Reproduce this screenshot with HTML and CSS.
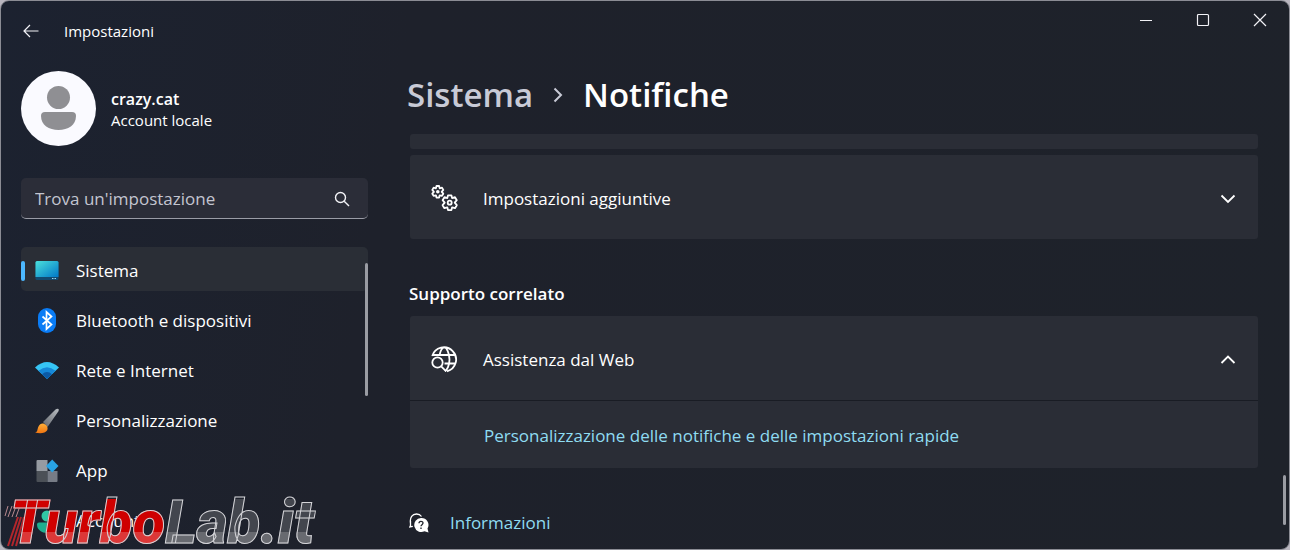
FILE: index.html
```html
<!DOCTYPE html>
<html lang="it">
<head>
    <meta charset="UTF-8">
    <meta name="viewport" content="width=device-width, initial-scale=1.0">
    <title>Impostazioni</title>
    <link rel="stylesheet" href="styles.css">
</head>
<body>

<div class="window">
    <header class="titlebar">
        <button class="back" aria-label="Indietro">
            <svg width="16" height="14" viewBox="0 0 16 14"><path d="M15.500 7H1M7 1L1 7l6 6"/></svg>
        </button>
        <span class="title">Impostazioni</span>
        <div class="window-controls">
            <button aria-label="Riduci a icona"><svg width="14" height="14" viewBox="0 0 14 14"><path d="M1 7.500h12"/></svg></button>
            <button aria-label="Ingrandisci"><svg width="14" height="14" viewBox="0 0 14 14"><rect x="1.500" y="1.500" width="11" height="11" rx="1"/></svg></button>
            <button aria-label="Chiudi"><svg width="14" height="14" viewBox="0 0 14 14"><path d="M1 1l12 12M13 1L1 13"/></svg></button>
        </div>
    </header>

    <div class="content">
        <aside class="sidebar">
            <div class="profile">
                <svg width="75" height="75" viewBox="0 0 75 75">
                    <circle cx="37.500" cy="37.500" r="37.500" fill="#fafaff"/>
                    <circle cx="37.500" cy="26.500" r="11.500" fill="#8f8f93"/>
                    <path d="M24 41h27q4 0 4 4c0 9-8 14-17.500 14S20 54 20 45q0-4 4-4z" fill="#8f8f93"/>
                </svg>
                <div class="user">
                    <div class="name">crazy.cat</div>
                    <div class="account">Account locale</div>
                </div>
            </div>

            <form class="search">
                <input type="search" placeholder="Trova un'impostazione" aria-label="Trova un'impostazione">
                <button type="button" aria-label="Cerca">
                    <svg width="16" height="16" viewBox="0 0 16 16"><circle cx="6.500" cy="6.500" r="5"/><path d="M10.200 10.200L15 15"/></svg>
                </button>
            </form>

            <nav class="nav">
                <a class="active" href="#sistema">
                    <svg width="24" height="24" viewBox="0 0 24 24">
                        <defs><linearGradient id="screen" x1="0" y1="0" x2="1" y2="1"><stop offset="0" stop-color="#4be0dc"/><stop offset="1" stop-color="#0078c8"/></linearGradient></defs>
                        <rect x=".5" y="2" width="23" height="19" rx="1.500" fill="#124a70"/>
                        <path d="M2 2h20q1.500 0 1.500 1.500V18H.5V3.500Q.5 2 2 2z" fill="url(#screen)"/>
                        <path d="M17 19.500h1.500M19.500 19.500H21" stroke="#9fd4ee"/>
                    </svg>
                    Sistema
                </a>
                <a href="#bluetooth">
                    <svg width="24" height="26" viewBox="0 0 24 26">
                        <rect x="3" y="0" width="18" height="25" rx="9" fill="#0a7cf5"/>
                        <path d="M7.500 8.500l9 8-5 4.500V4l5 4.500-9 8" fill="none" stroke="#fff" stroke-width="1.700"/>
                    </svg>
                    Bluetooth e dispositivi
                </a>
                <a href="#rete">
                    <svg width="24" height="24" viewBox="0 0 24 24">
                        <path d="M12 20L0 8.500Q12-2.500 24 8.500z" fill="#36c5f5"/>
                        <path d="M12 20L3.500 11.800Q12 4.500 20.500 11.800z" fill="#1688d8"/>
                        <path d="M12 20L7 15.200Q12 10.800 17 15.200z" fill="#0c5aa5"/>
                    </svg>
                    Rete e Internet
                </a>
                <a href="#personalizzazione">
                    <svg width="24" height="26" viewBox="0 0 24 26">
                        <defs>
                            <linearGradient id="handle" x1="0" y1="1" x2="1" y2="0"><stop offset="0" stop-color="#63676d"/><stop offset="1" stop-color="#b9bdc2"/></linearGradient>
                            <linearGradient id="bristle" x1="0" y1="0" x2="0" y2="1"><stop offset="0" stop-color="#ffb03a"/><stop offset="1" stop-color="#ef7410"/></linearGradient>
                        </defs>
                        <path d="M8 14L20.500 1.500q1.500-1.300 3-.5 .6 1.200-.2 2.500L12.500 19z" fill="url(#handle)"/>
                        <path d="M0 24.500c3-.5 2-3 3.500-6 1.500-3.500 5-4 7.500-1.500s2 6-1.500 7.500c-3 1.200-6.500.8-9.500 0z" fill="url(#bristle)"/>
                    </svg>
                    Personalizzazione
                </a>
                <a href="#app">
                    <svg width="24" height="24" viewBox="0 0 24 24">
                        <path d="M1.500 2q0-1 1-1h10v11h-11z" fill="#969ba2"/>
                        <path d="M1.500 12h11v11h-10q-1 0-1-1z" fill="#4b5057"/>
                        <path d="M12.500 12h10v10q0 1-1 1h-9z" fill="#777c86"/>
                        <path d="M17.200.5l6.300 6.500-6.300 6.500L11 7z" fill="#28a3e4"/>
                    </svg>
                    App
                </a>
                <a href="#account">
                    <svg width="24" height="24" viewBox="0 0 24 24">
                        <circle cx="12" cy="7" r="5.500" fill="#2fc7a5"/>
                        <path d="M4 13.500h16q2 0 2 2C22 21 17 24 12 24S2 21 2 15.500q0-2 2-2z" fill="#1fae90"/>
                    </svg>
                    Account
                </a>
                <span class="nav-thumb"></span>
            </nav>
        </aside>

        <main class="main">
            <h1 class="breadcrumb">
                <a href="#sistema">Sistema</a>
                <svg width="10" height="16" viewBox="0 0 10 16"><path d="M1.500 1.500L8 8l-6.500 6.500"/></svg>
                <span>Notifiche</span>
            </h1>

            <div class="card card-cut"></div>

            <div class="card">
                <button class="expander">
                    <svg width="28" height="28" viewBox="0 0 28 28">
                        <g stroke-linejoin="round">
                            <path d="M5.900 3.300L6.500 1h2.600l.6 2.300 2.300-.6 1.300 2.200-1.600 1.900 1.600 1.900-1.300 2.200-2.300-.6-.6 2.300H6.500l-.6-2.300-2.300.6-1.300-2.200 1.600-1.900-1.600-1.900 1.300-2.200z"/>
                            <path d="M17.300 13.100l.7-2.800h3.400l.7 2.800 2.900-.9 1.800 3-2.100 2.500 2.100 2.500-1.800 3-2.900-.9-.7 2.800H18l-.7-2.800-2.900.9-1.800-3 2.100-2.500-2.100-2.500 1.800-3z"/>
                        </g>
                        <circle cx="7.800" cy="6.800" r=".9"/>
                        <circle cx="19.700" cy="17.700" r="2"/>
                    </svg>
                    <span class="label">Impostazioni aggiuntive</span>
                    <svg width="16" height="10" viewBox="0 0 16 10"><path d="M1.500 1.500L8 8l6.500-6.500"/></svg>
                </button>
            </div>

            <h2>Supporto correlato</h2>

            <div class="card">
                <button class="expander" aria-expanded="true">
                    <svg width="28" height="28" viewBox="0 0 28 28">
                        <path d="M2.200 10A12.200 12.200 0 1 1 17 25.300M3 9h23M14.500 17.500h11M9.500 9C10.500 4.500 12.500 1.300 14.500 1.300S19.500 7.500 19.500 13.500s-2.500 10.500-4.500 11.800"/>
                        <circle cx="7.500" cy="16.500" r="5.200"/>
                        <path d="M11.200 20.400l5 5"/>
                    </svg>
                    <span class="label">Assistenza dal Web</span>
                    <svg width="16" height="10" viewBox="0 0 16 10"><path d="M1.500 8L8 1.500 14.500 8"/></svg>
                </button>
                <div class="panel">
                    <a href="#notifiche">Personalizzazione delle notifiche e delle impostazioni rapide</a>
                </div>
            </div>

            <div class="info">
                <svg width="20" height="20" viewBox="0 0 20 20">
                    <path d="M1.500 10.500C.5 4 3.500 1 7.500 1c2.500 0 4 1 5 2.500M1.500 8v4.500L.8 14l3-.7" fill="none" stroke="#fff" stroke-width="1.300"/>
                    <path d="M12 5a7 7 0 1 0 3.500 13.200l4 1.300-1-4A7 7 0 0 0 12 5z" fill="#fff"/>
                    <path d="M10 10.300c0-2.600 4-2.500 4-.2 0 1.600-2 1.600-2 3.200M12 14.500V16" fill="none" stroke="#1e222a" stroke-width="1.300"/>
                </svg>
                <a href="#informazioni">Informazioni</a>
            </div>
        </main>
    </div>

    <span class="page-thumb"></span>
    <div class="watermark">
        <svg width="22" height="42" viewBox="0 0 22 42">
            <path d="M4 1L1 11M8 1L4 12M12 1L8 12M16 1l-4 11" stroke="#b98a90"/>
            <path d="M14 12L4 41M17 12L8 41M20 12l-8 29" stroke="#b3262c" stroke-width="2"/>
        </svg>
        <span class="turbo">Turbo</span><span class="lab">Lab.it</span>
    </div>
</div>

</body>
</html>
```

FILE: styles.css
```css
* {
    box-sizing: border-box;
}

body {
    margin: 0;
    background: #b9b6bf;
    color: #fff;
    font-family: "Open Sans", "Noto Sans", sans-serif;
    font-size: 17px;
    line-height: 24px;
}

button {
    padding: 0;
    border: none;
    background: none;
    color: inherit;
    font: inherit;
}

a {
    color: #8fdcf2;
    text-decoration: none;
}

svg {
    flex: none;
}

.window {
    position: relative;
    display: flex;
    flex-direction: column;
    height: 100vh;
    overflow: hidden;
    border: 1px solid #8b8c94;
    border-radius: 9px;
    background: linear-gradient(100deg, #1c2230, #1e212b 30%, #1e222a);
}

/* Title bar */
.titlebar {
    display: flex;
    align-items: center;
    height: 60px;
    flex: none;
    padding: 0 1px 0 22px;
}

.titlebar svg {
    display: block;
    fill: none;
    stroke: #f2f2f6;
    stroke-width: 1.2;
}

.title {
    margin-left: 25px;
    font-size: 15px;
}

.window-controls {
    display: flex;
    align-self: flex-start;
    margin-left: auto;
}

.window-controls button {
    display: flex;
    align-items: center;
    justify-content: center;
    width: 57px;
    height: 38px;
}

.content {
    display: flex;
    flex: 1;
    min-height: 0;
    gap: 42px;
    padding: 0 31px 0 20px;
}

/* Sidebar */
.sidebar {
    width: 347px;
    flex: none;
    padding-top: 10px;
}

.profile {
    display: flex;
    align-items: center;
    gap: 15px;
    margin-bottom: 32px;
}

.user {
    padding-top: 3px;
}

.name {
    font-size: 16px;
    font-weight: 600;
    line-height: 21px;
}

.account {
    font-size: 15px;
    line-height: 21px;
}

.search {
    display: flex;
    align-items: center;
    height: 41px;
    margin-bottom: 28px;
    padding: 2px 18px 0 14px;
    border-bottom: 1px solid #9a9ca6;
    border-radius: 5px;
    background: #2b2d38;
}

.search input {
    flex: 1;
    min-width: 0;
    padding: 0;
    border: none;
    outline: none;
    background: none;
    color: #fff;
    font: inherit;
}

.search input::placeholder {
    color: #c3c5d0;
}

.search svg {
    display: block;
    fill: none;
    stroke: #f2f2f6;
    stroke-width: 1.4;
}

.nav {
    position: relative;
    display: flex;
    flex-direction: column;
    gap: 6px;
}

.nav a {
    display: flex;
    align-items: center;
    gap: 17px;
    height: 44px;
    padding: 3px 0 0 14px;
    border-radius: 5px;
    color: #fff;
}

.nav .active {
    position: relative;
    background: #2a2e36;
}

.nav .active::before {
    content: "";
    position: absolute;
    left: 0;
    width: 4px;
    height: 20px;
    border-radius: 2px;
    background: #4cb8ff;
}

.nav-thumb {
    position: absolute;
    top: 16px;
    right: 0;
    width: 3px;
    height: 133px;
    border-radius: 2px;
    background: #9a9ca3;
}

/* Main pane */
.main {
    flex: 1;
    min-width: 0;
}

.breadcrumb {
    display: flex;
    align-items: center;
    gap: 20px;
    height: 68px;
    margin: 0 0 5px -3px;
    font-size: 33px;
    font-weight: 600;
}

.breadcrumb a {
    color: #c8cad6;
}

.breadcrumb svg {
    fill: none;
    stroke: #c8cad6;
    stroke-width: 2;
}

.card {
    border-radius: 3px;
    background: #2a2d36;
}

.card-cut {
    height: 15px;
    margin-bottom: 6px;
}

.expander {
    display: flex;
    align-items: center;
    width: 100%;
    height: 84px;
    padding: 3px 22px 0 20px;
    text-align: left;
}

.expander svg {
    fill: none;
    stroke: #fff;
    stroke-width: 1.8;
}

.expander .label {
    flex: 1;
    margin-left: 25px;
}

h2 {
    margin: 43px 0 10px -1px;
    font-size: 17px;
    font-weight: 600;
}

.panel {
    padding: 23px 20px 20px 74px;
    border-top: 1px solid #191c24;
}

.info {
    display: flex;
    align-items: center;
    gap: 21px;
    margin: 43px 0 0 -1px;
}

.page-thumb {
    position: absolute;
    right: 3px;
    bottom: 24px;
    width: 3px;
    height: 50px;
    border-radius: 2px;
    background: #9a9ca3;
}

/* Site watermark */
.watermark {
    position: absolute;
    left: 3px;
    bottom: 2px;
    display: flex;
    align-items: flex-end;
    font-family: Roboto, "Liberation Sans", sans-serif;
    font-size: 60px;
    font-style: italic;
    font-weight: 900;
    line-height: 48px;
    pointer-events: none;
}

.watermark svg {
    margin-right: -16px;
    fill: none;
}

.watermark span {
    -webkit-background-clip: text;
    background-clip: text;
    color: transparent;
    -webkit-text-stroke: 1px #d4d4d8;
}

.turbo {
    background-image: linear-gradient(#cf0000 68%, #dc3838 68%);
}

.lab {
    background-image: linear-gradient(#43464e 68%, #686a70 68%);
}
```
